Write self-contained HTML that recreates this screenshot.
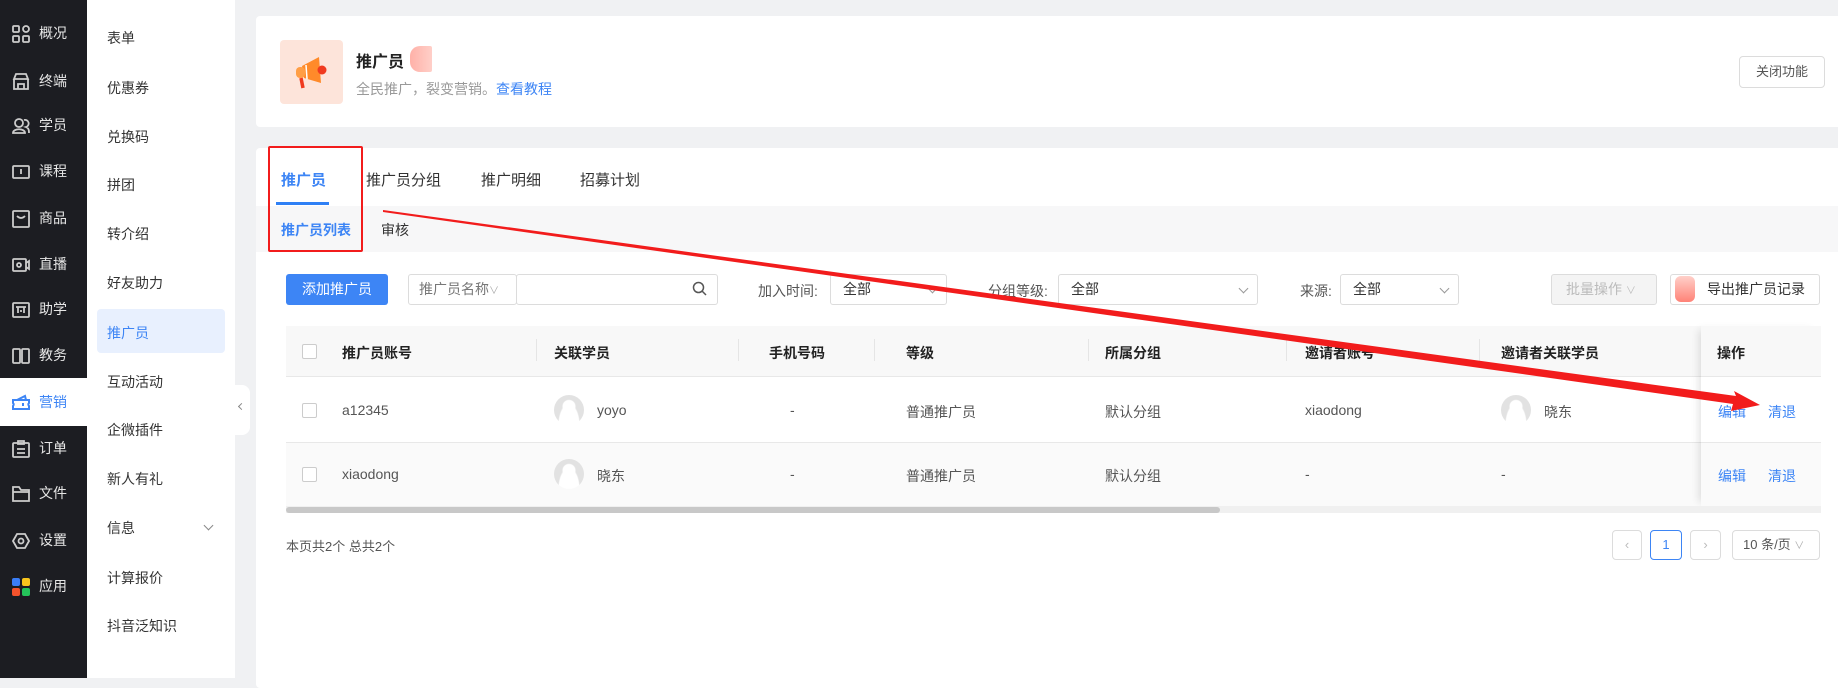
<!DOCTYPE html>
<html><head><meta charset="utf-8"><style>
*{margin:0;padding:0;box-sizing:border-box}
body{width:1838px;height:678px;overflow:hidden;background:#f0f1f3;font-family:"Liberation Sans","Noto Sans CJK SC",sans-serif;font-size:14px;color:#333;position:relative}
.a{position:absolute}
.side{left:0;top:0;width:87px;height:678px;background:#1c1d22}
.si{position:absolute;left:0;width:87px;height:46px;color:#e6e6e6;font-size:14px}
.si svg{position:absolute;left:12px;top:15px}
.si span{position:absolute;left:39px;top:13px}
.menu{left:87px;top:0;width:148px;height:678px;background:#fff}
.mi{position:absolute;left:20px;font-size:14px;color:#333}
.card{background:#fff;border-radius:4px}
.btn{position:absolute;border:1px solid #dcdcdc;border-radius:4px;background:#fff;text-align:center;font-size:13px;color:#555}
.sel{position:absolute;border:1px solid #dcdcdc;border-radius:3px;background:#fff;height:31px;top:274px;font-size:14px;color:#333;padding-left:12px;line-height:29px}
.chev{position:absolute;right:10px;top:10px;width:7px;height:7px;border-right:1px solid #999;border-bottom:1px solid #999;transform:rotate(45deg)}
.lab{position:absolute;top:281px;font-size:14px;color:#555}
.th{position:absolute;top:343px;font-size:14px;color:#222;font-weight:bold}
.dv{position:absolute;top:339px;width:1px;height:22px;background:#e5e5e5}
.td{position:absolute;font-size:14px;color:#555}
.cb{position:absolute;left:302px;width:15px;height:15px;border:1px solid #ccc;border-radius:2px;background:#fff}
.av{position:absolute;width:30px;height:30px;border-radius:50%;background:radial-gradient(circle at 50% 38%,#fff 0 6px,transparent 7px),radial-gradient(ellipse at 50% 100%,#fff 0 10px,transparent 11px),#e2e2e2}
.lk{position:absolute;color:#3d85f5;font-size:14px}
</style></head><body>

<div class="a side"></div>
<div class="a" style="left:0;top:378px;width:87px;height:48px;background:#fff"></div>
<div class="si" style="top:10px"><svg width="18" height="18" fill="none" stroke="#ccc" stroke-width="1.8"><rect x="1" y="1" width="6" height="6" rx="1"/><rect x="11" y="1" width="6" height="6" rx="3"/><rect x="1" y="11" width="6" height="6" rx="1"/><rect x="11" y="11" width="6" height="6" rx="1"/></svg><span>概况</span></div>
<div class="si" style="top:58px"><svg width="18" height="18" fill="none" stroke="#ccc" stroke-width="1.8"><path d="M2 6 L4 1 H14 L16 6 Z M2 6 V16 H16 V6 M6 16 V11 H12 V16"/></svg><span>终端</span></div>
<div class="si" style="top:102px"><svg width="18" height="18" fill="none" stroke="#ccc" stroke-width="1.8"><circle cx="7" cy="6" r="4"/><path d="M1 16 C1 11 13 11 13 16 Z M12 3 A3 3 0 0 1 14 10 C17 11 17 14 17 16"/></svg><span>学员</span></div>
<div class="si" style="top:148px"><svg width="18" height="18" fill="none" stroke="#ccc" stroke-width="1.8"><rect x="1" y="3" width="16" height="12" rx="1"/><path d="M9 6 V11"/></svg><span>课程</span></div>
<div class="si" style="top:195px"><svg width="18" height="18" fill="none" stroke="#ccc" stroke-width="1.8"><rect x="1" y="1" width="16" height="16" rx="1"/><path d="M5 6 Q9 10 13 6"/></svg><span>商品</span></div>
<div class="si" style="top:241px"><svg width="18" height="18" fill="none" stroke="#ccc" stroke-width="1.8"><rect x="1" y="3" width="13" height="12" rx="1"/><circle cx="7" cy="9" r="2"/><path d="M14 7 L17 5 V13 L14 11"/></svg><span>直播</span></div>
<div class="si" style="top:286px"><svg width="18" height="18" fill="none" stroke="#ccc" stroke-width="1.8"><rect x="1" y="2" width="16" height="14" rx="1"/><path d="M4 6 H14 M6 6 V12 M12 6 V12 M8 10 H10"/></svg><span>助学</span></div>
<div class="si" style="top:332px"><svg width="18" height="18" fill="none" stroke="#ccc" stroke-width="1.8"><rect x="1" y="2" width="7" height="14" rx="1"/><rect x="10" y="2" width="7" height="14" rx="1"/></svg><span>教务</span></div>
<div class="si" style="top:379px;color:#3d85f5"><svg width="18" height="18" fill="none" stroke="#3d85f5" stroke-width="2"><path d="M1 6 H17 V9 A2 2 0 0 0 17 12 V15 H1 V12 A2 2 0 0 0 1 9 Z M5 6 L13 2 L14 6 M11 9 V12"/></svg><span>营销</span></div>
<div class="si" style="top:425px"><svg width="18" height="18" fill="none" stroke="#ccc" stroke-width="1.8"><rect x="1" y="3" width="16" height="14" rx="1"/><path d="M6 1 H12 V4 H6 Z M5 9 H13 M5 13 H13"/></svg><span>订单</span></div>
<div class="si" style="top:470px"><svg width="18" height="18" fill="none" stroke="#ccc" stroke-width="1.8"><path d="M1 2 H7 L9 5 H17 V16 H1 Z M1 7 H17"/></svg><span>文件</span></div>
<div class="si" style="top:517px"><svg width="18" height="18" fill="none" stroke="#ccc" stroke-width="1.8"><path d="M5 2 H13 L17 9 L13 16 H5 L1 9 Z"/><circle cx="9" cy="9" r="2.5"/></svg><span>设置</span></div>
<div class="si" style="top:563px"><svg width="18" height="18"><rect x="0" y="0" width="8" height="8" rx="2" fill="#3a7ef7"/><rect x="10" y="0" width="8" height="8" rx="2" fill="#f8c51c"/><rect x="0" y="10" width="8" height="8" rx="2" fill="#f4532c"/><rect x="10" y="10" width="8" height="8" rx="2" fill="#24c45a"/></svg><span>应用</span></div>

<div class="a menu"></div>
<div class="a" style="left:97px;top:309px;width:128px;height:44px;background:#e8f0fe;border-radius:4px"></div>
<div class="mi" style="left:107px;top:28px">表单</div>
<div class="mi" style="left:107px;top:78px">优惠券</div>
<div class="mi" style="left:107px;top:127px">兑换码</div>
<div class="mi" style="left:107px;top:175px">拼团</div>
<div class="mi" style="left:107px;top:224px">转介绍</div>
<div class="mi" style="left:107px;top:273px">好友助力</div>
<div class="mi" style="left:107px;top:323px;color:#3d85f5">推广员</div>
<div class="mi" style="left:107px;top:372px">互动活动</div>
<div class="mi" style="left:107px;top:420px">企微插件</div>
<div class="mi" style="left:107px;top:469px">新人有礼</div>
<div class="mi" style="left:107px;top:518px">信息</div>
<div class="a" style="left:205px;top:522px;width:7px;height:7px;border-right:1px solid #888;border-bottom:1px solid #888;transform:rotate(45deg)"></div>
<div class="mi" style="left:107px;top:568px">计算报价</div>
<div class="mi" style="left:107px;top:616px">抖音泛知识</div>
<div class="a" style="left:235px;top:385px;width:15px;height:50px;background:#fff;border-radius:0 8px 8px 0"></div>
<div class="a" style="left:239px;top:404px;width:5px;height:5px;border-left:1px solid #888;border-bottom:1px solid #888;transform:rotate(45deg)"></div>

<!-- top card -->
<div class="a card" style="left:256px;top:16px;width:1600px;height:111px"></div>
<div class="a" style="left:280px;top:40px;width:63px;height:64px;background:#fde4da;border-radius:4px"></div>
<svg class="a" style="left:292px;top:52px" width="40" height="40"><path d="M10 14 L27 5 L29 31 L12 26 Z" fill="#ff8a2a"/><rect x="4" y="15" width="9" height="11" rx="4" fill="#ff9e45"/><circle cx="30" cy="18" r="4.5" fill="#f03a1f"/><path d="M9 26 L11 36" stroke="#f03a1f" stroke-width="3.5"/><path d="M14 13 L15 27" stroke="#fff" stroke-width="1.5"/></svg>
<div class="a" style="left:356px;top:48px;font-size:16px;font-weight:bold;color:#222">推广员</div>
<div class="a" style="left:410px;top:46px;width:22px;height:26px;background:linear-gradient(90deg,#ffb1a8,#ffcfc8);border-radius:10px 2px 2px 10px"></div>
<div class="a" style="left:356px;top:79px;font-size:14px;color:#999">全民推广，裂变营销。<span style="color:#3d85f5">查看教程</span></div>
<div class="btn" style="left:1739px;top:56px;width:86px;height:32px;line-height:30px">关闭功能</div>

<!-- main card -->
<div class="a card" style="left:256px;top:148px;width:1600px;height:540px"></div>
<div class="a" style="left:281px;top:169px;font-size:15px;color:#3d85f5;font-weight:bold">推广员</div>
<div class="a" style="left:366px;top:169px;font-size:15px;color:#333">推广员分组</div>
<div class="a" style="left:481px;top:169px;font-size:15px;color:#333">推广明细</div>
<div class="a" style="left:580px;top:169px;font-size:15px;color:#333">招募计划</div>
<div class="a" style="left:276px;top:202px;width:53px;height:3px;background:#2f80f5"></div>
<div class="a" style="left:256px;top:206px;width:1600px;height:46px;background:#f7f7f8"></div>
<div class="a" style="left:281px;top:220px;font-size:14px;color:#3d85f5;font-weight:bold">推广员列表</div>
<div class="a" style="left:381px;top:220px;font-size:14px;color:#333">审核</div>

<!-- toolbar -->
<div class="a" style="left:286px;top:274px;width:102px;height:31px;background:#3d85f5;border-radius:3px;color:#fff;font-size:14px;text-align:center;line-height:31px">添加推广员</div>
<div class="sel" style="left:408px;width:109px;color:#777;padding-left:10px">推广员名称<span style="font-size:10px;color:#aaa">∨</span></div>
<div class="sel" style="left:516px;width:202px"></div>
<svg class="a" style="left:692px;top:281px" width="16" height="16" fill="none" stroke="#555" stroke-width="1.5"><circle cx="6.5" cy="6.5" r="5"/><path d="M10 10 L14 14"/></svg>
<div class="lab" style="left:758px">加入时间:</div>
<div class="sel" style="left:830px;width:117px">全部<i class="chev"></i></div>
<div class="lab" style="left:988px">分组等级:</div>
<div class="sel" style="left:1058px;width:200px">全部<i class="chev"></i></div>
<div class="lab" style="left:1300px">来源:</div>
<div class="sel" style="left:1340px;width:119px">全部<i class="chev"></i></div>
<div class="sel" style="left:1551px;width:106px;background:#f4f4f4;color:#bbb;padding-left:14px">批量操作 <span style="font-size:10px">∨</span></div>
<div class="sel" style="left:1670px;width:150px;padding-left:36px">导出推广员记录</div>
<div class="a" style="left:1675px;top:276px;width:20px;height:26px;background:linear-gradient(#ffd0ca,#ff8277);border-radius:6px"></div>

<!-- table -->
<div class="a" style="left:286px;top:326px;width:1535px;height:51px;background:#f8f8f8;border-bottom:1px solid #e8e8e8"></div>
<div class="a" style="left:286px;top:442px;width:1535px;height:64px;background:#fafafa;border-top:1px solid #e8e8e8"></div>
<div class="cb" style="top:344px"></div>
<div class="th" style="left:342px">推广员账号</div><div class="dv" style="left:536px"></div>
<div class="th" style="left:554px">关联学员</div><div class="dv" style="left:738px"></div>
<div class="th" style="left:769px">手机号码</div><div class="dv" style="left:874px"></div>
<div class="th" style="left:906px">等级</div><div class="dv" style="left:1088px"></div>
<div class="th" style="left:1105px">所属分组</div><div class="dv" style="left:1286px"></div>
<div class="th" style="left:1305px">邀请者账号</div><div class="dv" style="left:1479px"></div>
<div class="th" style="left:1501px">邀请者关联学员</div>

<div class="cb" style="top:403px"></div>
<div class="td" style="left:342px;top:402px">a12345</div>
<div class="av" style="left:554px;top:395px"></div><div class="td" style="left:597px;top:402px">yoyo</div>
<div class="td" style="left:790px;top:402px">-</div>
<div class="td" style="left:906px;top:402px">普通推广员</div>
<div class="td" style="left:1105px;top:402px">默认分组</div>
<div class="td" style="left:1305px;top:402px">xiaodong</div>
<div class="av" style="left:1501px;top:395px"></div><div class="td" style="left:1544px;top:402px">晓东</div>

<div class="cb" style="top:467px"></div>
<div class="td" style="left:342px;top:466px">xiaodong</div>
<div class="av" style="left:554px;top:459px"></div><div class="td" style="left:597px;top:466px">晓东</div>
<div class="td" style="left:790px;top:466px">-</div>
<div class="td" style="left:906px;top:466px">普通推广员</div>
<div class="td" style="left:1105px;top:466px">默认分组</div>
<div class="td" style="left:1305px;top:466px">-</div>
<div class="td" style="left:1501px;top:466px">-</div>

<!-- fixed column -->
<div class="a" style="left:1701px;top:326px;width:120px;height:180px;background:#fff;box-shadow:-6px 0 8px -4px rgba(0,0,0,.12)"></div>
<div class="a" style="left:1701px;top:326px;width:120px;height:51px;background:#f8f8f8;border-bottom:1px solid #e8e8e8"></div>
<div class="a" style="left:1701px;top:442px;width:120px;height:64px;background:#fafafa;border-top:1px solid #e8e8e8"></div>
<div class="th" style="left:1717px">操作</div>
<div class="lk" style="left:1718px;top:402px">编辑</div><div class="lk" style="left:1768px;top:402px">清退</div>
<div class="lk" style="left:1718px;top:466px">编辑</div><div class="lk" style="left:1768px;top:466px">清退</div>
<div class="a" style="left:286px;top:506px;width:1535px;height:7px;background:#f0f0f0"></div>
<div class="a" style="left:286px;top:507px;width:934px;height:6px;background:#c8c8c8;border-radius:3px"></div>

<!-- footer -->
<div class="a" style="left:286px;top:536px;font-size:13px;color:#555">本页共2个 总共2个</div>
<div class="btn" style="left:1612px;top:530px;width:30px;height:30px;line-height:28px;color:#bbb">‹</div>
<div class="btn" style="left:1650px;top:530px;width:32px;height:30px;line-height:28px;color:#3d85f5;border-color:#3d85f5">1</div>
<div class="btn" style="left:1690px;top:530px;width:31px;height:30px;line-height:28px;color:#bbb">›</div>
<div class="btn" style="left:1732px;top:530px;width:88px;height:30px;line-height:28px;text-align:left;padding-left:10px">10 条/页 <span style="font-size:10px;color:#aaa">∨</span></div>

<!-- annotations -->
<div class="a" style="left:268px;top:146px;width:95px;height:106px;border:2px solid #f21c1c;border-radius:2px"></div>
<svg class="a" style="left:0;top:0" width="1838" height="678"><polygon points="383,210 1736,396 1734,391 1760,405 1731,411 1733,404 383,212" fill="#f21c1c"/></svg>
</body></html>
